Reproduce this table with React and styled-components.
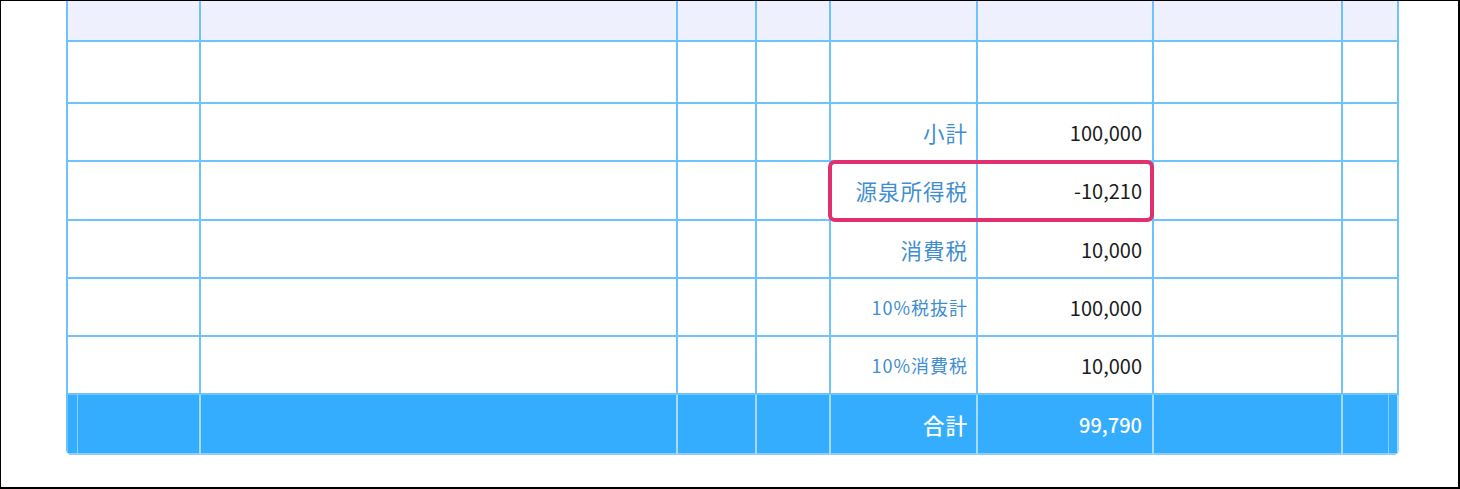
import React from "react";
import styled, { createGlobalStyle } from "styled-components";

const Global = createGlobalStyle`
  html, body { margin: 0; padding: 0; background: #fff; }
  body { font-family: "Noto Sans CJK JP", "Noto Sans", sans-serif; }
`;

const Frame = styled.div`
  box-sizing: border-box;
  width: 1460px;
  height: 489px;
  border-style: solid;
  border-color: #000;
  border-width: 1px 2px 2px 1px;
  overflow: hidden;
  padding-left: 65px;
`;

const Sheet = styled.div`
  width: 1333px;
  border-radius: 0 0 6px 6px;
  overflow: hidden;
`;

const COLS = "135px 477px 79px 74px 147px 176px 189px 56px";

const Row = styled.div`
  display: grid;
  grid-template-columns: ${COLS};
  height: ${(p) => p.$h}px;
  background: ${(p) =>
    p.$kind === "head" ? "#eef0fd" : p.$kind === "total" ? "#35adff" : "#fff"};
`;

const Cell = styled.div`
  box-sizing: border-box;
  position: relative;
  display: flex;
  align-items: center;
  justify-content: flex-end;
  padding-right: ${(p) => p.$pr ?? 10}px;
  border-right: 2px solid ${(p) => (p.$total ? "#a6dbff" : "#6ec3ff")};
  border-bottom: 2px solid ${(p) => (p.$total ? "#8ccfff" : "#6ec3ff")};
  ${(p) => p.$first && `border-left: 2px solid #6ec3ff;`}
  ${(p) =>
    p.$total && p.$first &&
    `background: linear-gradient(to right, transparent 9px, #8fd0ff 9px, #8fd0ff 10px, transparent 10px);`}
  ${(p) =>
    p.$total && p.$last &&
    `background: linear-gradient(to left, transparent 8px, #8fd0ff 8px, #8fd0ff 9px, transparent 9px);`}
`;

const Label = styled.span`
  font-size: ${(p) => (p.$small ? 18 : 21.5)}px;
  letter-spacing: 1px;
  color: ${(p) => (p.$total ? "#fff" : "#3f8ed3")};
  font-weight: ${(p) => (p.$total ? 500 : 400)};
  white-space: nowrap;
`;

const Value = styled.span`
  font-size: 20px;
  color: ${(p) => (p.$total ? "#fff" : "#1b1b1b")};
  font-weight: ${(p) => (p.$total ? 500 : 400)};
  white-space: nowrap;
`;

const Highlight = styled.div`
  position: absolute;
  z-index: 2;
  left: -3px;
  top: -2px;
  width: calc(100% + 181px);
  height: calc(100% + 5px);
  box-sizing: border-box;
  border: 4px solid #e0306f;
  border-radius: 7px;
  pointer-events: none;
`;

const rows = [
  { h: 62 },
  { h: 58, label: "小計", value: "100,000" },
  { h: 59, label: "源泉所得税", value: "-10,210", highlight: true },
  { h: 58, label: "消費税", value: "10,000" },
  { h: 58, label: "10%税抜計", value: "100,000", small: true },
  { h: 58, label: "10%消費税", value: "10,000", small: true },
];

const blanks = (n, props = {}) =>
  Array.from({ length: n }, (_, i) => <Cell key={i} {...props} />);

export default function App() {
  return (
    <>
      <Global />
      <Frame>
        <Sheet>
          <Row $h={41} $kind="head">
            <Cell $first />
            {blanks(7)}
          </Row>
          {rows.map((r, i) => (
            <Row key={i} $h={r.h}>
              <Cell $first />
              {blanks(3)}
              <Cell $pr={8}>
                {r.label && <Label $small={r.small}>{r.label}</Label>}
                {r.highlight && <Highlight />}
              </Cell>
              <Cell>{r.value && <Value>{r.value}</Value>}</Cell>
              {blanks(2)}
            </Row>
          ))}
          <Row $h={60} $kind="total">
            <Cell $first $total />
            {blanks(3, { $total: true })}
            <Cell $total $pr={8}>
              <Label $total>合計</Label>
            </Cell>
            <Cell $total>
              <Value $total>99,790</Value>
            </Cell>
            <Cell $total />
            <Cell $total $last />
          </Row>
        </Sheet>
      </Frame>
    </>
  );
}
